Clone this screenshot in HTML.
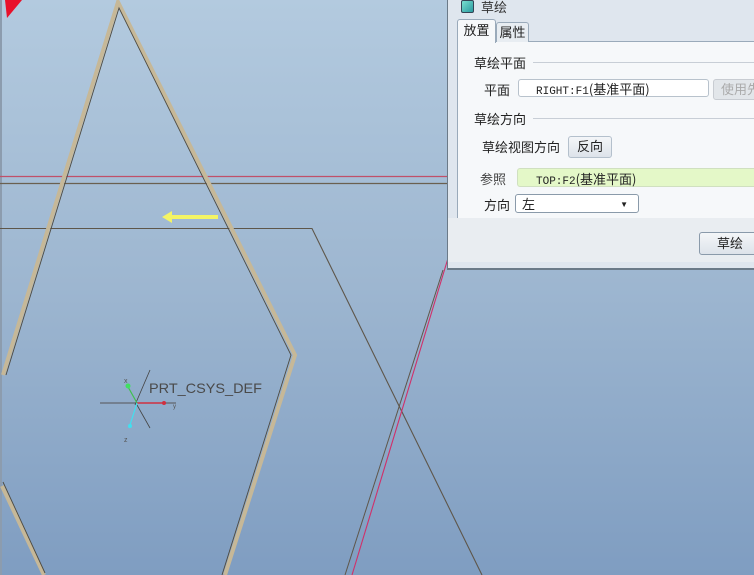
<!DOCTYPE html>
<html><head><meta charset="utf-8"><style>
html,body{margin:0;padding:0;width:754px;height:575px;overflow:hidden;}
body{position:relative;background:linear-gradient(#b3cadf 0%,#9db6d0 50%,#7f9dc1 100%);font-family:"Liberation Sans","Noto Sans CJK SC",sans-serif;font-size:13px;color:#222;}
.abs{position:absolute;}
.panel{left:447px;top:0;width:307px;height:268px;background:#dfe6ee;border-left:1px solid #6b7a88;border-bottom:2px solid #6b7a88;}
.box{border:1px solid #b8c2cc;border-radius:3px;background:#fff;}
.btn{border:1px solid #8a9aaa;border-radius:3px;background:linear-gradient(#f4f6f8,#dde3ea);text-align:center;}
.mono{font-family:"Liberation Mono","Noto Sans CJK SC",monospace;font-size:11px;}
</style></head><body>
<svg class="abs" style="left:0;top:0" width="754" height="575">
<rect x="0" y="0" width="2" height="575" fill="#8c9cae"/>
<line x1="0" y1="176.5" x2="447" y2="176.5" stroke="#c0506a" stroke-width="1.2"/>
<line x1="0" y1="183.5" x2="447" y2="183.5" stroke="#6a6050" stroke-width="1.2"/>
<polyline points="0,228.5 312,228.5 482,575" fill="none" stroke="#5e564a" stroke-width="1.1"/>
<line x1="443" y1="270" x2="345" y2="575" stroke="#5e564a" stroke-width="1"/>
<line x1="449" y1="255" x2="352" y2="575" stroke="#d0306a" stroke-width="1.1"/>
<polyline points="3,375 118,2 295,355 225,575" fill="none" stroke="#c6b898" stroke-width="4"/>
<polyline points="6,375 119,8 291,355 222,575" fill="none" stroke="#4e4a40" stroke-width="0.9"/>
<polyline points="2,486 44,575" fill="none" stroke="#c6b898" stroke-width="4"/>
<polyline points="3,482 45,573" fill="none" stroke="#4e4a40" stroke-width="0.9"/>
<polygon points="5,0 22,0 7,18" fill="#e8102a"/>
<polygon points="162,217 172,211 172,215 218,215 218,219 172,219 172,223" fill="#f4f464"/>
<line x1="100" y1="403" x2="176" y2="403" stroke="#555" stroke-width="1"/>
<line x1="137" y1="403" x2="166" y2="403" stroke="#d03040" stroke-width="1.5"/>
<circle cx="164" cy="403" r="2" fill="#d03040"/>
<line x1="150" y1="370" x2="135" y2="405" stroke="#444" stroke-width="0.8"/>
<line x1="137" y1="405" x2="150" y2="428" stroke="#444" stroke-width="0.8"/>
<line x1="137" y1="403" x2="127" y2="385" stroke="#40c050" stroke-width="1.2"/>
<circle cx="128" cy="386" r="2.5" fill="#40e060"/>
<line x1="137" y1="403" x2="129" y2="428" stroke="#40e0f0" stroke-width="1.2"/>
<circle cx="130" cy="426" r="2" fill="#40e0f0"/>
<text x="124" y="383" font-size="7" fill="#555" font-family="Liberation Sans">x</text>
<text x="124" y="442" font-size="7" fill="#555" font-family="Liberation Sans">z</text>
<text x="173" y="408" font-size="6" fill="#555" font-family="Liberation Sans">y</text>
<text x="149" y="393" font-size="14" fill="#4a4a4a" font-family="Liberation Sans" textLength="113" lengthAdjust="spacingAndGlyphs">PRT_CSYS_DEF</text>
</svg>
<div class="abs panel">
 <div class="abs" style="left:13px;top:0;width:11px;height:11px;background:linear-gradient(135deg,#7ae0d0,#2a9aa0);border:1px solid #345;border-radius:2px"></div>
 <div class="abs" style="left:33px;top:-3px;font-size:13px;color:#333">草绘</div>
 <div class="abs" style="left:9px;top:41px;width:298px;height:176px;background:#f6f8fa;border-top:1px solid #9aaaba;border-left:1px solid #9aaaba;border-bottom:1px solid #8a98a8"></div>
 <div class="abs" style="left:9px;top:19px;width:37px;height:23px;background:#f6f8fa;border:1px solid #9aaaba;border-bottom:none;border-radius:3px 3px 0 0;text-align:center;line-height:22px">放置</div>
 <div class="abs" style="left:48px;top:22px;width:31px;height:19px;background:#e8edf2;border:1px solid #9aaaba;border-bottom:none;border-radius:3px 3px 0 0;text-align:center;line-height:19px">属性</div>
 <div class="abs" style="left:26px;top:53px">草绘平面</div>
 <div class="abs" style="left:85px;top:62px;width:222px;height:1px;background:#c8ced6"></div>
 <div class="abs" style="left:36px;top:80px">平面</div>
 <div class="abs box mono" style="left:70px;top:79px;height:18px;line-height:18px;padding-left:17px;box-sizing:border-box;width:191px">RIGHT:F1<span style="font-size:13px;font-family:'Noto Sans CJK SC',sans-serif">(基准平面)</span></div>
 <div class="abs" style="left:265px;top:79px;width:50px;height:19px;background:#e2e6ea;border:1px solid #c8ccd2;border-radius:3px;color:#aaa;line-height:19px;padding-left:7px">使用先</div>
 <div class="abs" style="left:26px;top:109px">草绘方向</div>
 <div class="abs" style="left:85px;top:118px;width:222px;height:1px;background:#c8ced6"></div>
 <div class="abs" style="left:34px;top:137px">草绘视图方向</div>
 <div class="abs btn" style="left:120px;top:136px;width:42px;height:20px;line-height:20px;border-color:#b4c0cc">反向</div>
 <div class="abs" style="left:32px;top:169px;color:#444">参照</div>
 <div class="abs mono" style="left:69px;top:168px;width:240px;height:19px;background:#e4f8c8;border:1px solid #d0e0c0;border-radius:3px;line-height:19px;padding-left:18px;box-sizing:border-box">TOP:F2<span style="font-size:13px;font-family:'Noto Sans CJK SC',sans-serif">(基准平面)</span></div>
 <div class="abs" style="left:36px;top:195px">方向</div>
 <div class="abs box" style="left:67px;top:194px;width:124px;height:19px;line-height:19px;padding-left:6px;box-sizing:border-box;border-color:#8a9aaa">左<span style="position:absolute;right:10px;top:0;font-size:8px">▼</span></div>
 <div class="abs" style="left:0;top:218px;width:307px;height:44px;background:#e9edf1"></div>
 <div class="abs btn" style="left:251px;top:232px;width:60px;height:21px;line-height:21px">草绘</div>
</div>
</body></html>
